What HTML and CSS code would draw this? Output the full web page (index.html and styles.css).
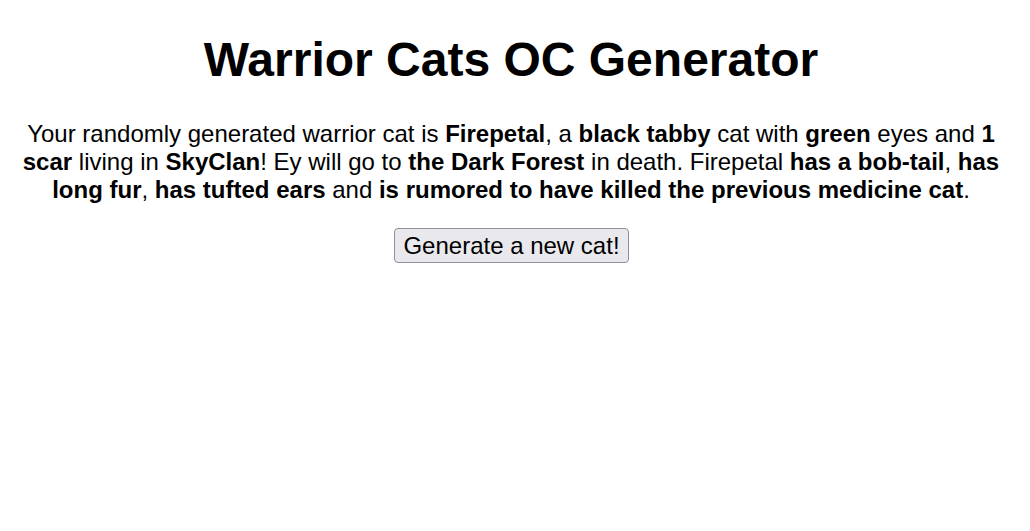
FILE: index.html
```html
<!DOCTYPE html>
<html>
<head>
<meta charset="utf-8">
<title>Warrior Cats OC Generator</title>
<link rel="stylesheet" href="styles.css">
</head>
<body>
<main class="page">
<h1 class="title">Warrior Cats OC Generator</h1>
<p class="result">Your randomly generated warrior cat is <b>Firepetal</b>, a <b>black tabby</b> cat with <b>green</b> eyes and <b>1 scar</b> living in <b>SkyClan</b>! Ey will go to <b>the Dark Forest</b> in death. Firepetal <b>has a bob-tail</b>, <b>has long fur</b>, <b>has tufted ears</b> and <b>is rumored to have killed the previous medicine cat</b>.</p>
<div class="actions"><button class="gen-btn" type="button">Generate a new cat!</button></div>
</main>
</body>
</html>
```
FILE: styles.css
```css
html, body {
  margin: 0;
  background: #fff;
}
body {
  padding: 8px;
  font-family: "Liberation Sans", Arial, sans-serif;
  color: #000;
}
.page {
  text-align: center;
  padding: 0 19px 0 11px;
}
.title {
  font-size: 48px;
  font-weight: bold;
  margin: 24px 0 33px;
}
.result {
  font-size: 24px;
  margin: 0 0 24px;
}
.actions {
  display: flex;
  justify-content: center;
  padding-left: 1px;
}
.gen-btn {
  font-family: "Liberation Sans", Arial, sans-serif;
  font-size: 24px;
  line-height: 28px;
  color: #000;
  background: #e9e9ed;
  border: 1px solid #8f8f9d;
  border-radius: 4px;
  padding: 3px 8px 2px;
}
```
